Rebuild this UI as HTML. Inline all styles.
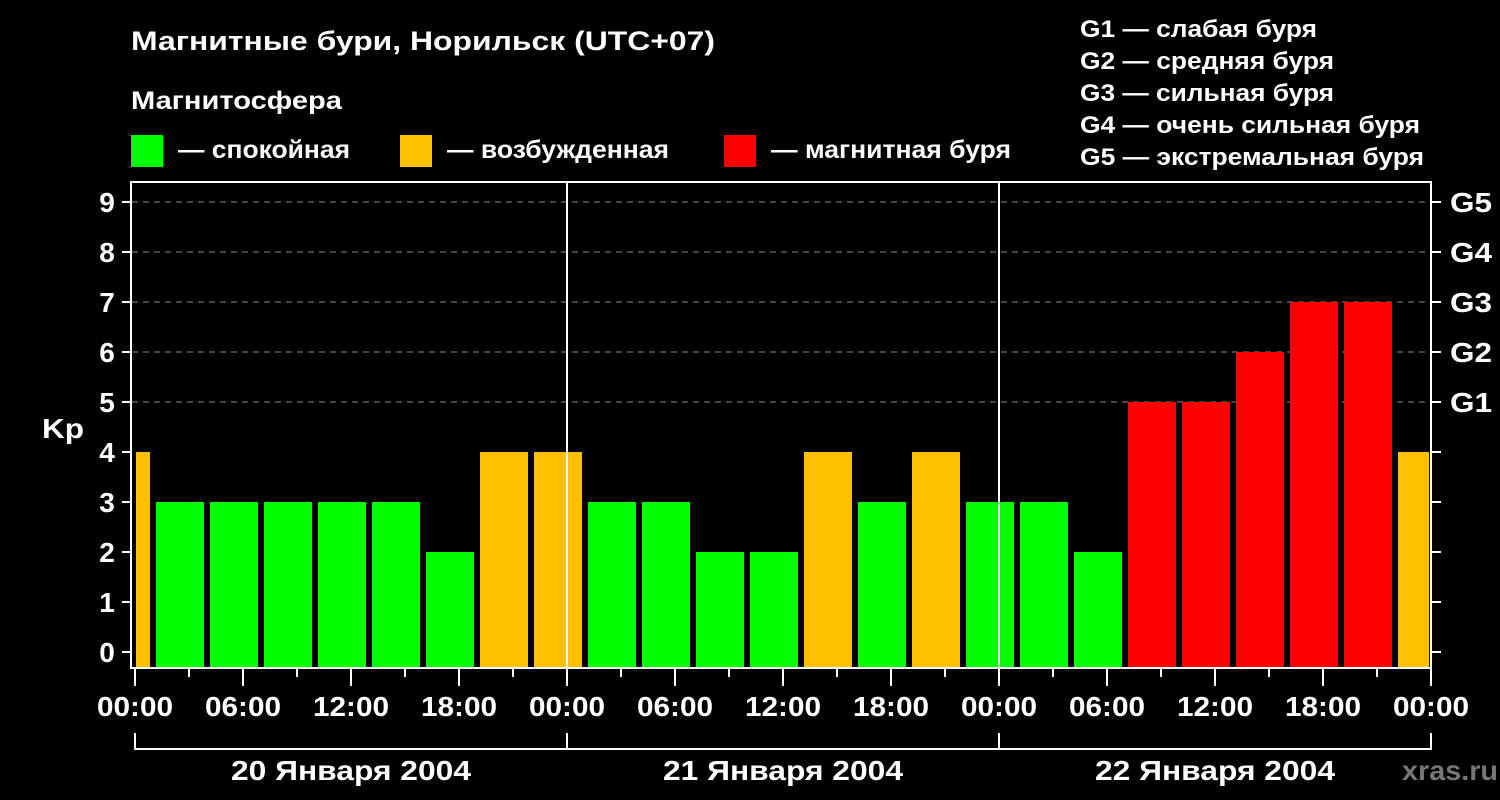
<!DOCTYPE html>
<html><head><meta charset="utf-8"><style>
html,body{margin:0;padding:0;background:#000;}
svg{display:block}
text{font-family:"Liberation Sans",sans-serif;font-weight:bold;fill:#fff}
</style></head><body>
<svg width="1500" height="800" xmlns="http://www.w3.org/2000/svg">
<rect width="1500" height="800" fill="#000"/>
<text x="131" y="50" font-size="27" textLength="584" lengthAdjust="spacingAndGlyphs">Магнитные бури, Норильск (UTC+07)</text>
<text x="131" y="109" font-size="25" textLength="211" lengthAdjust="spacingAndGlyphs">Магнитосфера</text>
<rect x="131" y="135" width="32" height="32" fill="#00ff00"/>
<text x="178" y="158" font-size="25" textLength="172" lengthAdjust="spacingAndGlyphs">— спокойная</text>
<rect x="400" y="135" width="32" height="32" fill="#ffc000"/>
<text x="447" y="158" font-size="25" textLength="222" lengthAdjust="spacingAndGlyphs">— возбужденная</text>
<rect x="724" y="135" width="32" height="32" fill="#ff0000"/>
<text x="771" y="158" font-size="25" textLength="240" lengthAdjust="spacingAndGlyphs">— магнитная буря</text>
<g font-size="24">
<text x="1080" y="37" textLength="237" lengthAdjust="spacingAndGlyphs">G1 — слабая буря</text>
<text x="1080" y="69" textLength="254" lengthAdjust="spacingAndGlyphs">G2 — средняя буря</text>
<text x="1080" y="101" textLength="254" lengthAdjust="spacingAndGlyphs">G3 — сильная буря</text>
<text x="1080" y="133" textLength="340" lengthAdjust="spacingAndGlyphs">G4 — очень сильная буря</text>
<text x="1080" y="165" textLength="344" lengthAdjust="spacingAndGlyphs">G5 — экстремальная буря</text>
</g>
<g stroke="#888" stroke-width="1" stroke-dasharray="6,5">
<line x1="132" y1="202" x2="1430" y2="202"/><line x1="132" y1="252" x2="1430" y2="252"/>
<line x1="132" y1="302" x2="1430" y2="302"/><line x1="132" y1="352" x2="1430" y2="352"/>
<line x1="132" y1="402" x2="1430" y2="402"/>
</g>
<rect x="136" y="452" width="14" height="216" fill="#ffc000"/>
<g fill="#00ff00">
<rect x="156" y="502" width="48" height="166"/><rect x="210" y="502" width="48" height="166"/>
<rect x="264" y="502" width="48" height="166"/><rect x="318" y="502" width="48" height="166"/>
<rect x="372" y="502" width="48" height="166"/><rect x="426" y="552" width="48" height="116"/>
<rect x="588" y="502" width="48" height="166"/><rect x="642" y="502" width="48" height="166"/>
<rect x="696" y="552" width="48" height="116"/><rect x="750" y="552" width="48" height="116"/>
<rect x="858" y="502" width="48" height="166"/><rect x="966" y="502" width="48" height="166"/>
<rect x="1020" y="502" width="48" height="166"/><rect x="1074" y="552" width="48" height="116"/>
</g>
<g fill="#ffc000">
<rect x="480" y="452" width="48" height="216"/><rect x="534" y="452" width="48" height="216"/>
<rect x="804" y="452" width="48" height="216"/><rect x="912" y="452" width="48" height="216"/>
<rect x="1398" y="452" width="31" height="216"/>
</g>
<g fill="#ff0000">
<rect x="1128" y="402" width="48" height="266"/><rect x="1182" y="402" width="48" height="266"/>
<rect x="1236" y="352" width="48" height="316"/><rect x="1290" y="302" width="48" height="366"/>
<rect x="1344" y="302" width="48" height="366"/>
</g>
<g stroke="#fff" stroke-width="2" fill="none">
<rect x="131" y="182" width="1300" height="486"/>
<line x1="567" y1="182" x2="567" y2="668"/><line x1="999" y1="182" x2="999" y2="668"/>
<path d="M122 652H131M122 602H131M122 552H131M122 502H131M122 452H131M122 402H131M122 352H131M122 302H131M122 252H131M122 202H131"/>
<path d="M1431 652H1441M1431 602H1441M1431 552H1441M1431 502H1441M1431 452H1441M1431 402H1441M1431 352H1441M1431 302H1441M1431 252H1441M1431 202H1441"/>
<path d="M135 669V686M243 669V686M351 669V686M459 669V686M567 669V686M675 669V686M783 669V686M891 669V686M999 669V686M1107 669V686M1215 669V686M1323 669V686M1431 669V686"/>
<path d="M189 669V677M297 669V677M405 669V677M513 669V677M621 669V677M729 669V677M837 669V677M945 669V677M1053 669V677M1161 669V677M1269 669V677M1377 669V677"/>
<polyline points="135,733 135,749 1431,749 1431,733"/>
<line x1="567" y1="733" x2="567" y2="749"/><line x1="999" y1="733" x2="999" y2="749"/>
</g>
<g font-size="28" text-anchor="middle">
<text x="107" y="662">0</text><text x="107" y="612">1</text><text x="107" y="562">2</text>
<text x="107" y="512">3</text><text x="107" y="462">4</text><text x="107" y="412">5</text>
<text x="107" y="362">6</text><text x="107" y="312">7</text><text x="107" y="262">8</text>
<text x="107" y="212">9</text>
</g>
<g font-size="28">
<text x="1450" y="412" textLength="42" lengthAdjust="spacingAndGlyphs">G1</text>
<text x="1450" y="362" textLength="42" lengthAdjust="spacingAndGlyphs">G2</text>
<text x="1450" y="312" textLength="42" lengthAdjust="spacingAndGlyphs">G3</text>
<text x="1450" y="262" textLength="42" lengthAdjust="spacingAndGlyphs">G4</text>
<text x="1450" y="212" textLength="42" lengthAdjust="spacingAndGlyphs">G5</text>
<text x="42" y="438" textLength="42" lengthAdjust="spacingAndGlyphs">Kp</text>
</g>
<g font-size="28">
<text x="97" y="716" textLength="76" lengthAdjust="spacingAndGlyphs">00:00</text>
<text x="205" y="716" textLength="76" lengthAdjust="spacingAndGlyphs">06:00</text>
<text x="313" y="716" textLength="76" lengthAdjust="spacingAndGlyphs">12:00</text>
<text x="421" y="716" textLength="76" lengthAdjust="spacingAndGlyphs">18:00</text>
<text x="529" y="716" textLength="76" lengthAdjust="spacingAndGlyphs">00:00</text>
<text x="637" y="716" textLength="76" lengthAdjust="spacingAndGlyphs">06:00</text>
<text x="745" y="716" textLength="76" lengthAdjust="spacingAndGlyphs">12:00</text>
<text x="853" y="716" textLength="76" lengthAdjust="spacingAndGlyphs">18:00</text>
<text x="961" y="716" textLength="76" lengthAdjust="spacingAndGlyphs">00:00</text>
<text x="1069" y="716" textLength="76" lengthAdjust="spacingAndGlyphs">06:00</text>
<text x="1177" y="716" textLength="76" lengthAdjust="spacingAndGlyphs">12:00</text>
<text x="1285" y="716" textLength="76" lengthAdjust="spacingAndGlyphs">18:00</text>
<text x="1393" y="716" textLength="76" lengthAdjust="spacingAndGlyphs">00:00</text>
</g>
<g font-size="28">
<text x="231" y="780" textLength="240" lengthAdjust="spacingAndGlyphs">20 Января 2004</text>
<text x="663" y="780" textLength="240" lengthAdjust="spacingAndGlyphs">21 Января 2004</text>
<text x="1095" y="780" textLength="240" lengthAdjust="spacingAndGlyphs">22 Января 2004</text>
<text x="1402" y="780" textLength="96" lengthAdjust="spacingAndGlyphs" style="fill:#777">xras.ru</text>
</g>
</svg>
</body></html>
